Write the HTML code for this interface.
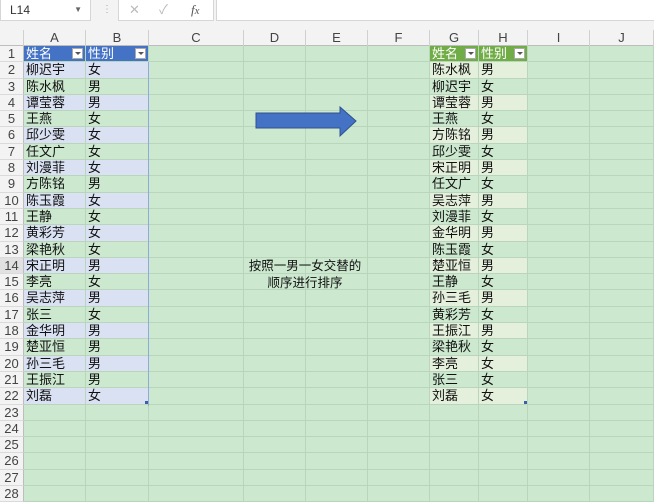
<!DOCTYPE html>
<html><head><meta charset="utf-8">
<style>
*{margin:0;padding:0;box-sizing:border-box}
body{width:654px;height:500px;overflow:hidden;background:#cce8cf;font-family:"Liberation Sans","Noto Sans CJK SC",sans-serif;position:relative}
#top{position:absolute;left:0;top:0;width:654px;height:46px;background:#f3f3f3}
.box{position:absolute;background:#fff;border:1px solid #d6d6d6;top:-1px;height:22px}
#colh{position:absolute;top:30px;left:0;height:16px;width:654px;background:#f3f3f3;border-bottom:1px solid #bdbdbd;font-size:13px;color:#444}
#colh div{position:absolute;top:0;height:16px;text-align:center;line-height:16px;border-right:1px solid #d0d0d0}
#grid{position:absolute;top:46px;left:0}
.r{height:16.3px;display:flex;font-size:13px;line-height:16px;color:#111}
.r>div{height:16.3px;border-right:1px solid #b9d5bc;border-bottom:1px solid #b9d5bc;padding-left:2px;white-space:nowrap;overflow:hidden}
.r>div.n{width:24px;background:#f3f3f3;color:#444;text-align:center;padding:0;border-right:1px solid #bdbdbd;border-bottom:1px solid #dadada}
.a{width:62px}.b{width:63px}.c{width:95px}.d,.e,.f,.i{width:62px}.g,.h{width:49px}.j{width:64px}
.bl{background:#d9e1f2}.bh{background:#4472c4;color:#fff}
.gl{background:#e5f0dc}.gh{background:#70ad47;color:#fff}
.dd{display:inline-block;width:11px;height:11px;background:#fff;border:1px solid #aaa;vertical-align:middle;float:right;margin:2px 2px 0 0;position:relative}
.dd:after{content:"";position:absolute;left:2px;top:3px;border-left:3px solid transparent;border-right:3px solid transparent;border-top:3px solid #555}
</style></head><body>
<div id="top">
 <div class="box" style="left:0;width:91px;font-size:12px;line-height:20px;padding-left:9px;color:#333">L14<span style="position:absolute;right:8px;top:0;font-size:8px;color:#666">▼</span></div>
 <div style="position:absolute;left:102px;top:4px;color:#aaa;font-size:10px">⋮</div>
 <div class="box" style="left:118px;width:96px;color:#bbb;font-size:13px;line-height:20px"><span style="position:absolute;left:10px">✕</span><span style="position:absolute;left:40px">✓</span><span style="position:absolute;left:72px;color:#555;font-style:italic;font-family:'Liberation Serif',serif">f<small>x</small></span></div>
 <div class="box" style="left:216px;width:440px"></div>
</div>
<div id="colh">
 <div style="left:0;width:24px"></div>
 <div style="left:24px;width:62px">A</div><div style="left:86px;width:63px">B</div><div style="left:149px;width:95px">C</div><div style="left:244px;width:62px">D</div><div style="left:306px;width:62px">E</div><div style="left:368px;width:62px">F</div><div style="left:430px;width:49px">G</div><div style="left:479px;width:49px">H</div><div style="left:528px;width:62px">I</div><div style="left:590px;width:64px">J</div>
</div>
<div id="grid">
<div class="r"><div class="n">1</div><div class="a bh">姓名<span class="dd"></span></div><div class="b bh">性别<span class="dd"></span></div><div class="c"></div><div class="d"></div><div class="e"></div><div class="f"></div><div class="g gh">姓名<span class="dd"></span></div><div class="h gh">性别<span class="dd"></span></div><div class="i"></div><div class="j"></div></div>
<div class="r"><div class="n">2</div><div class="a bl">柳迟宇</div><div class="b bl">女</div><div class="c"></div><div class="d"></div><div class="e"></div><div class="f"></div><div class="g gl">陈水枫</div><div class="h gl">男</div><div class="i"></div><div class="j"></div></div>
<div class="r"><div class="n">3</div><div class="a">陈水枫</div><div class="b">男</div><div class="c"></div><div class="d"></div><div class="e"></div><div class="f"></div><div class="g">柳迟宇</div><div class="h">女</div><div class="i"></div><div class="j"></div></div>
<div class="r"><div class="n">4</div><div class="a bl">谭莹蓉</div><div class="b bl">男</div><div class="c"></div><div class="d"></div><div class="e"></div><div class="f"></div><div class="g gl">谭莹蓉</div><div class="h gl">男</div><div class="i"></div><div class="j"></div></div>
<div class="r"><div class="n">5</div><div class="a">王燕</div><div class="b">女</div><div class="c"></div><div class="d"></div><div class="e"></div><div class="f"></div><div class="g">王燕</div><div class="h">女</div><div class="i"></div><div class="j"></div></div>
<div class="r"><div class="n">6</div><div class="a bl">邱少雯</div><div class="b bl">女</div><div class="c"></div><div class="d"></div><div class="e"></div><div class="f"></div><div class="g gl">方陈铭</div><div class="h gl">男</div><div class="i"></div><div class="j"></div></div>
<div class="r"><div class="n">7</div><div class="a">任文广</div><div class="b">女</div><div class="c"></div><div class="d"></div><div class="e"></div><div class="f"></div><div class="g">邱少雯</div><div class="h">女</div><div class="i"></div><div class="j"></div></div>
<div class="r"><div class="n">8</div><div class="a bl">刘漫菲</div><div class="b bl">女</div><div class="c"></div><div class="d"></div><div class="e"></div><div class="f"></div><div class="g gl">宋正明</div><div class="h gl">男</div><div class="i"></div><div class="j"></div></div>
<div class="r"><div class="n">9</div><div class="a">方陈铭</div><div class="b">男</div><div class="c"></div><div class="d"></div><div class="e"></div><div class="f"></div><div class="g">任文广</div><div class="h">女</div><div class="i"></div><div class="j"></div></div>
<div class="r"><div class="n">10</div><div class="a bl">陈玉霞</div><div class="b bl">女</div><div class="c"></div><div class="d"></div><div class="e"></div><div class="f"></div><div class="g gl">吴志萍</div><div class="h gl">男</div><div class="i"></div><div class="j"></div></div>
<div class="r"><div class="n">11</div><div class="a">王静</div><div class="b">女</div><div class="c"></div><div class="d"></div><div class="e"></div><div class="f"></div><div class="g">刘漫菲</div><div class="h">女</div><div class="i"></div><div class="j"></div></div>
<div class="r"><div class="n">12</div><div class="a bl">黄彩芳</div><div class="b bl">女</div><div class="c"></div><div class="d"></div><div class="e"></div><div class="f"></div><div class="g gl">金华明</div><div class="h gl">男</div><div class="i"></div><div class="j"></div></div>
<div class="r"><div class="n">13</div><div class="a">梁艳秋</div><div class="b">女</div><div class="c"></div><div class="d"></div><div class="e"></div><div class="f"></div><div class="g">陈玉霞</div><div class="h">女</div><div class="i"></div><div class="j"></div></div>
<div class="r"><div class="n" style="background:#e1e1e1">14</div><div class="a bl">宋正明</div><div class="b bl">男</div><div class="c"></div><div class="d"></div><div class="e"></div><div class="f"></div><div class="g gl">楚亚恒</div><div class="h gl">男</div><div class="i"></div><div class="j"></div></div>
<div class="r"><div class="n">15</div><div class="a">李亮</div><div class="b">女</div><div class="c"></div><div class="d"></div><div class="e"></div><div class="f"></div><div class="g">王静</div><div class="h">女</div><div class="i"></div><div class="j"></div></div>
<div class="r"><div class="n">16</div><div class="a bl">吴志萍</div><div class="b bl">男</div><div class="c"></div><div class="d"></div><div class="e"></div><div class="f"></div><div class="g gl">孙三毛</div><div class="h gl">男</div><div class="i"></div><div class="j"></div></div>
<div class="r"><div class="n">17</div><div class="a">张三</div><div class="b">女</div><div class="c"></div><div class="d"></div><div class="e"></div><div class="f"></div><div class="g">黄彩芳</div><div class="h">女</div><div class="i"></div><div class="j"></div></div>
<div class="r"><div class="n">18</div><div class="a bl">金华明</div><div class="b bl">男</div><div class="c"></div><div class="d"></div><div class="e"></div><div class="f"></div><div class="g gl">王振江</div><div class="h gl">男</div><div class="i"></div><div class="j"></div></div>
<div class="r"><div class="n">19</div><div class="a">楚亚恒</div><div class="b">男</div><div class="c"></div><div class="d"></div><div class="e"></div><div class="f"></div><div class="g">梁艳秋</div><div class="h">女</div><div class="i"></div><div class="j"></div></div>
<div class="r"><div class="n">20</div><div class="a bl">孙三毛</div><div class="b bl">男</div><div class="c"></div><div class="d"></div><div class="e"></div><div class="f"></div><div class="g gl">李亮</div><div class="h gl">女</div><div class="i"></div><div class="j"></div></div>
<div class="r"><div class="n">21</div><div class="a">王振江</div><div class="b">男</div><div class="c"></div><div class="d"></div><div class="e"></div><div class="f"></div><div class="g">张三</div><div class="h">女</div><div class="i"></div><div class="j"></div></div>
<div class="r"><div class="n">22</div><div class="a bl">刘磊</div><div class="b bl">女</div><div class="c"></div><div class="d"></div><div class="e"></div><div class="f"></div><div class="g gl">刘磊</div><div class="h gl">女</div><div class="i"></div><div class="j"></div></div>
<div class="r"><div class="n">23</div><div class="a"></div><div class="b"></div><div class="c"></div><div class="d"></div><div class="e"></div><div class="f"></div><div class="g"></div><div class="h"></div><div class="i"></div><div class="j"></div></div>
<div class="r"><div class="n">24</div><div class="a"></div><div class="b"></div><div class="c"></div><div class="d"></div><div class="e"></div><div class="f"></div><div class="g"></div><div class="h"></div><div class="i"></div><div class="j"></div></div>
<div class="r"><div class="n">25</div><div class="a"></div><div class="b"></div><div class="c"></div><div class="d"></div><div class="e"></div><div class="f"></div><div class="g"></div><div class="h"></div><div class="i"></div><div class="j"></div></div>
<div class="r"><div class="n">26</div><div class="a"></div><div class="b"></div><div class="c"></div><div class="d"></div><div class="e"></div><div class="f"></div><div class="g"></div><div class="h"></div><div class="i"></div><div class="j"></div></div>
<div class="r"><div class="n">27</div><div class="a"></div><div class="b"></div><div class="c"></div><div class="d"></div><div class="e"></div><div class="f"></div><div class="g"></div><div class="h"></div><div class="i"></div><div class="j"></div></div>
<div class="r"><div class="n">28</div><div class="a"></div><div class="b"></div><div class="c"></div><div class="d"></div><div class="e"></div><div class="f"></div><div class="g"></div><div class="h"></div><div class="i"></div><div class="j"></div></div>
</div>
<div style="position:absolute;left:148px;top:62px;width:1px;height:344px;background:#8ea9db"></div>
<div style="position:absolute;left:145px;top:401px;width:3px;height:3px;background:#3b5fa8"></div>
<div style="position:absolute;left:524px;top:401px;width:3px;height:3px;background:#3b5fa8"></div>
<svg style="position:absolute;left:0;top:0" width="654" height="500"><polygon points="256,113 340,113 340,107 356,121 340,136 340,128 256,128" fill="#4472c4" stroke="#2f528f" stroke-width="1"/></svg>
<div style="position:absolute;left:230px;top:258px;width:150px;text-align:center;font-size:12.5px;line-height:17px;color:#111">按照一男一女交替的<br>顺序进行排序</div>
</body></html>
